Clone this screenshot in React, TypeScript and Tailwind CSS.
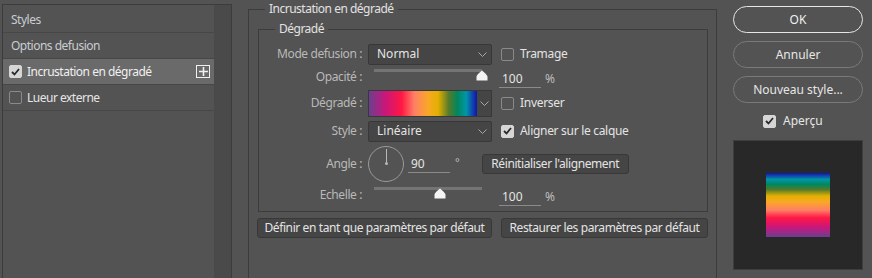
import React from 'react';

const stops =
  '#6b3f8f 0%,#c8177c 15%,#ff1744 30%,#ff7f66 42%,#f9a825 55%,#e3b000 64%,#557a2a 74%,#00875f 82%,#0096a6 90%,#1533b0 97%,#0a1aa0 100%';

const Check = ({ checked }: { checked?: boolean }) => (
  <span
    className={`w-[13px] h-[13px] rounded-[2px] border flex items-center justify-center shrink-0 ${
      checked ? 'bg-[#d6d6d6] border-[#d6d6d6]' : 'border-[#8a8a8a] bg-transparent'
    }`}
  >
    {checked && (
      <svg width="9" height="8" viewBox="0 0 9 8">
        <path d="M1 4 L3.5 6.5 L8 1" fill="none" stroke="#2a2a2a" strokeWidth="1.8" />
      </svg>
    )}
  </span>
);

const Chevron = () => (
  <svg width="9" height="5" viewBox="0 0 9 5" className="shrink-0">
    <path d="M0.5 0.5 L4.5 4.5 L8.5 0.5" fill="none" stroke="#a8a8a8" strokeWidth="1" />
  </svg>
);

const Select = ({ value }: { value: string }) => (
  <div className="w-[124px] h-[21px] bg-[#454545] border border-[#383838] rounded-[2px] flex items-center justify-between pl-[8px] pr-[4px] text-[#e4e4e4] text-[12px]">
    <span>{value}</span>
    <Chevron />
  </div>
);

const Thumb = ({ left }: { left: string }) => (
  <svg width="12" height="11" viewBox="0 0 12 11" className={`absolute top-[1px] ${left}`}>
    <path d="M6 0.5 C7.5 2 11 4.5 11.5 6.5 V10.5 H0.5 V6.5 C1 4.5 4.5 2 6 0.5 Z" fill="#f4f4f4" />
  </svg>
);

const Slider = ({ thumb }: { thumb: string }) => (
  <div className="w-[124px] h-full flex items-center">
    <div className="relative ml-[6px] w-[108px] h-[12px] -mt-[4px]">
      <div className="h-[3px] bg-[#747474]" />
      <Thumb left={thumb} />
    </div>
  </div>
);

const NumInput = ({ value, unit }: { value: string; unit: string }) => (
  <div className="flex items-center ml-[7px] mt-[3px]">
    <div className="w-[42px] border-b border-[#8a8a8a] pl-[3px] leading-[17px] text-[#e4e4e4] text-[12px]">{value}</div>
    <span className="ml-[4px] text-[#bdbdbd] text-[12px]">{unit}</span>
  </div>
);

const Label = ({ children }: { children: React.ReactNode }) => (
  <div className="w-[104px] text-right pr-[1px] text-[#b9b9b9] shrink-0 text-[12px] tracking-[-0.4px]">{children}</div>
);

export default function App() {
  return (
    <div
      className="w-[872px] h-[278px] bg-[#535353] flex overflow-hidden text-[11px] text-[#d2d2d2]"
      style={{ fontFamily: '"Noto Sans", "DejaVu Sans", sans-serif' }}
    >
      {/* left list */}
      <div className="ml-[2px] mt-[4px] w-[230px] h-[300px] border-l border-t border-r border-[#3c3c3c] flex shrink-0 text-[12px] tracking-[-0.5px]">
        <div className="w-[211px] flex flex-col">
          <div className="h-[28px] border-b border-[#474747] flex items-center pl-[8px] pt-[2px] text-[#c9cdd2]">Styles</div>
          <div className="h-[26px] border-b border-[#474747] flex items-center pl-[8px] pt-[1px] text-[#c9cdd2]">Options defusion</div>
          <div className="h-[26px] border-b border-[#474747] bg-[#6a6a6a] flex items-center pl-[6px] pr-[4px] text-[#f0f0f0]">
            <Check checked />
            <span className="ml-[5px] flex-1">Incrustation en dégradé</span>
            <span className="w-[14px] h-[13px] border border-[#f0f0f0] flex items-center justify-center">
              <svg width="9" height="9" viewBox="0 0 9 9">
                <path d="M4.5 0 V9 M0 4.5 H9" stroke="#f0f0f0" strokeWidth="1.6" />
              </svg>
            </span>
          </div>
          <div className="h-[26px] border-b border-[#474747] flex items-center pl-[6px] text-[#e6e6e6]">
            <Check />
            <span className="ml-[5px]">Lueur externe</span>
          </div>
        </div>
        <div className="w-[17px] bg-[#4a4a4a]" />
      </div>

      {/* middle */}
      <fieldset className="ml-[16px] w-[469px] h-[320px] border border-[#3c3c3c] shrink-0">
        <legend className="ml-[16px] px-[4px] leading-[18px] text-[#e2e2e2] text-[12px] tracking-[-0.5px]">Incrustation en dégradé</legend>
        <fieldset className="mt-[2px] ml-[9px] mr-[8px] border border-[#3c3c3c] pb-[4px]">
          <legend className="ml-[16px] px-[4px] leading-[18px] text-[#e2e2e2] text-[12px] tracking-[-0.5px]">Dégradé</legend>
          <div className="mt-[5px] h-[22px] flex items-center">
            <Label>Mode defusion :</Label>
            <div className="ml-[5px]"><Select value="Normal" /></div>
            <div className="ml-[9px]"><Check /></div>
            <span className="ml-[6px] text-[#e4e4e4] text-[12px] tracking-[-0.3px]">Tramage</span>
          </div>
          <div className="h-[24px] flex items-center">
            <Label>Opacité :</Label>
            <div className="ml-[5px] h-full"><Slider thumb="left-[102px]" /></div>
            <NumInput value="100" unit="%" />
          </div>
          <div className="h-[28px] flex items-center">
            <Label>Dégradé :</Label>
            <div className="ml-[5px] w-[124px] h-[27px] bg-[#454545] border border-[#383838] flex">
              <div className="w-[108px] h-full" style={{ background: `linear-gradient(to right, ${stops})` }} />
              <div className="flex-1 flex items-center justify-center"><Chevron /></div>
            </div>
            <div className="ml-[9px]"><Check /></div>
            <span className="ml-[6px] text-[#e4e4e4] text-[12px] tracking-[-0.3px]">Inverser</span>
          </div>
          <div className="mt-[3px] h-[22px] flex items-center">
            <Label>Style :</Label>
            <div className="ml-[5px]"><Select value="Linéaire" /></div>
            <div className="ml-[9px]"><Check checked /></div>
            <span className="ml-[6px] text-[#e4e4e4] text-[12px] tracking-[-0.3px]">Aligner sur le calque</span>
          </div>
          <div className="mt-[3px] h-[38px] flex items-center">
            <Label>Angle :</Label>
            <div className="ml-[5px] w-[36px] h-[36px] rounded-full border border-[#9a9a9a] flex justify-center">
              <div className="flex flex-col items-center mt-[2px]">
                <div className="w-[1px] h-[14px] bg-[#b8b8b8]" />
                <div className="w-[3px] h-[3px] rounded-full bg-[#b8b8b8] -mt-[1px]" />
              </div>
            </div>
            <div className="ml-[4px] flex items-center">
              <div className="w-[42px] border-b border-[#8a8a8a] pl-[3px] leading-[17px] text-[#e4e4e4] text-[12px]">90</div>
              <span className="ml-[5px] -mt-[4px] text-[#bdbdbd]">°</span>
            </div>
            <button className="ml-[22px] h-[20px] w-[147px] whitespace-nowrap bg-[#454545] border border-[#383838] rounded-[3px] text-[#e4e4e4] leading-none text-[12px] tracking-[-0.4px]">
              Réinitialiser l'alignement
            </button>
          </div>
          <div className="h-[24px] flex items-center">
            <Label>Echelle :</Label>
            <div className="ml-[5px] h-full"><Slider thumb="left-[60px]" /></div>
            <NumInput value="100" unit="%" />
          </div>
        </fieldset>
        <div className="mt-[6px] ml-[8px] flex gap-[9px] text-[12px] tracking-[-0.4px]">
          <button className="w-[235px] h-[20px] whitespace-nowrap bg-[#454545] border border-[#383838] rounded-[3px] text-[#e4e4e4] leading-none">
            Définir en tant que paramètres par défaut
          </button>
          <button className="w-[207px] h-[20px] whitespace-nowrap bg-[#454545] border border-[#383838] rounded-[3px] text-[#e4e4e4] leading-none">
            Restaurer les paramètres par défaut
          </button>
        </div>
      </fieldset>

      {/* right */}
      <div className="ml-[16px] mt-[6px] w-[130px] flex flex-col shrink-0 text-[12px]">
        <button className="h-[27px] rounded-full border border-[#e6e6e6] text-[#f0f0f0]">OK</button>
        <button className="mt-[8px] h-[27px] rounded-full border border-[#7a7a7a] text-[#e6e6e6]">Annuler</button>
        <button className="mt-[8px] h-[27px] rounded-full border border-[#7a7a7a] text-[#e6e6e6]">Nouveau style...</button>
        <div className="mt-[8px] h-[20px] flex items-center pl-[30px]">
          <Check checked />
          <span className="ml-[7px] text-[#e6e6e6]">Aperçu</span>
        </div>
        <div className="mt-[9px] h-[130px] bg-[#282828] border border-[#3e3e3e] flex items-center justify-center">
          <div className="w-[64px] h-[64px]" style={{ background: `linear-gradient(to top, ${stops})` }} />
        </div>
      </div>
    </div>
  );
}
